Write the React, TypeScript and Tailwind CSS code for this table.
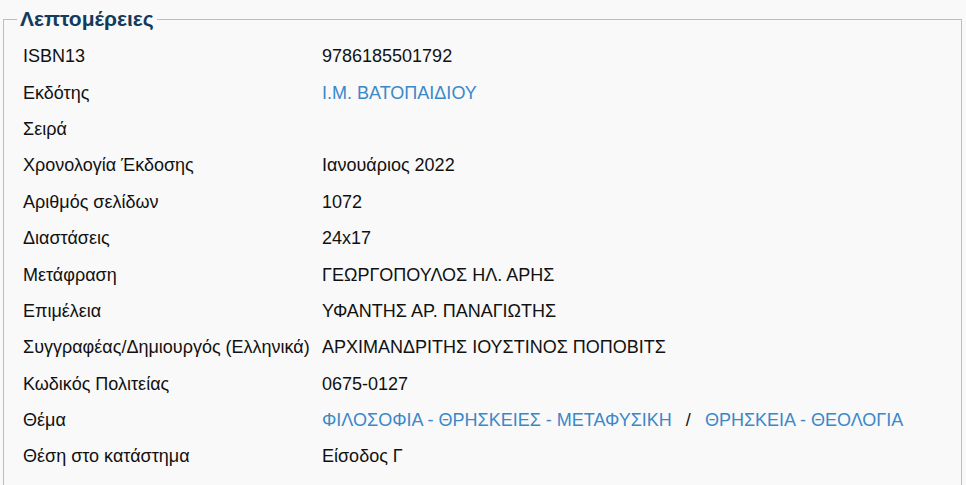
const rows: { label: string; value: string; link?: boolean }[] = [
  { label: 'ISBN13', value: '9786185501792' },
  { label: 'Εκδότης', value: 'Ι.Μ. ΒΑΤΟΠΑΙΔΙΟΥ', link: true },
  { label: 'Σειρά', value: '' },
  { label: 'Χρονολογία Έκδοσης', value: 'Ιανουάριος 2022' },
  { label: 'Αριθμός σελίδων', value: '1072' },
  { label: 'Διαστάσεις', value: '24x17' },
  { label: 'Μετάφραση', value: 'ΓΕΩΡΓΟΠΟΥΛΟΣ ΗΛ. ΑΡΗΣ' },
  { label: 'Επιμέλεια', value: 'ΥΦΑΝΤΗΣ ΑΡ. ΠΑΝΑΓΙΩΤΗΣ' },
  { label: 'Συγγραφέας/Δημιουργός (Ελληνικά)', value: 'ΑΡΧΙΜΑΝΔΡΙΤΗΣ ΙΟΥΣΤΙΝΟΣ ΠΟΠΟΒΙΤΣ' },
  { label: 'Κωδικός Πολιτείας', value: '0675-0127' },
]

const App = () => {
  return (
    <div className="min-h-screen bg-[#f9f9f9] px-[3px] pt-[7px] font-['Liberation_Sans',Arial,sans-serif] text-[18px] text-[#111]">
      <fieldset className="w-[959px] border border-[#bdbdbd] pb-[40px]">
        <legend className="ml-[13px] px-[3px] text-[21px] font-bold leading-[24px] text-[#133b5c]">
          Λεπτομέρειες
        </legend>

        <div className="flex flex-col pt-[7px] pl-[19px]">
          {rows.map((row) => (
            <div key={row.label} className="flex h-[36.4px] items-center leading-[20px]">
              <span className="w-[299px] shrink-0">{row.label}</span>
              <span className={row.link ? 'text-[#3a88c9]' : ''}>{row.value}</span>
            </div>
          ))}

          <div className="flex h-[36.4px] items-center leading-[20px]">
            <span className="w-[299px] shrink-0">Θέμα</span>
            <span className="text-[#3a88c9]">ΦΙΛΟΣΟΦΙΑ - ΘΡΗΣΚΕΙΕΣ - ΜΕΤΑΦΥΣΙΚΗ</span>
            <span className="mx-[14px]">/</span>
            <span className="text-[#3a88c9]">ΘΡΗΣΚΕΙΑ - ΘΕΟΛΟΓΙΑ</span>
          </div>

          <div className="flex h-[36.4px] items-center leading-[20px]">
            <span className="w-[299px] shrink-0">Θέση στο κατάστημα</span>
            <span>Είσοδος Γ</span>
          </div>
        </div>
      </fieldset>
    </div>
  )
}

export default App
